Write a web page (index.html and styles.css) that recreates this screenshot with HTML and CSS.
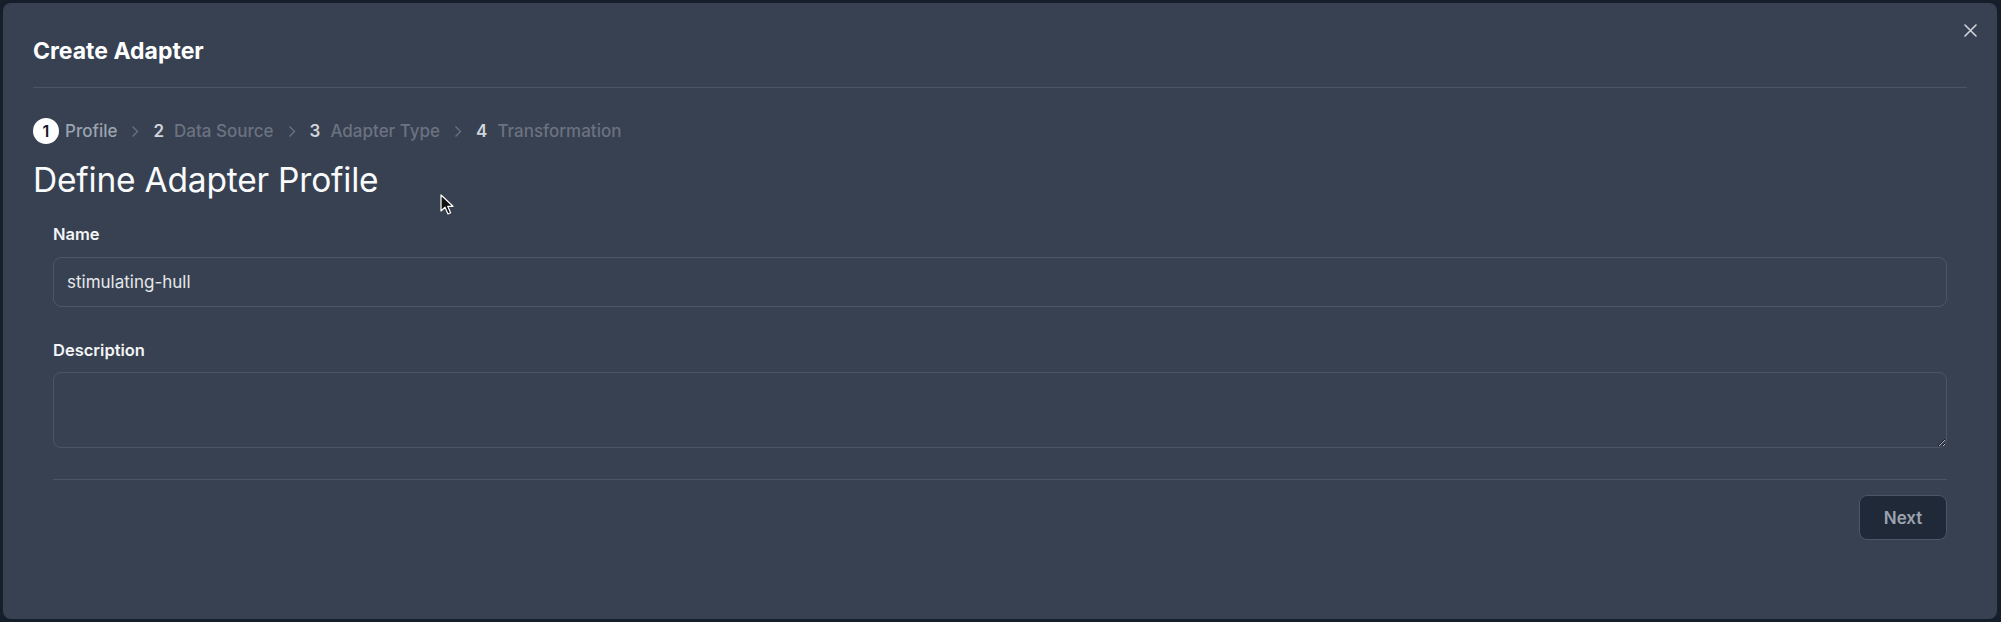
FILE: index.html
```html
<!DOCTYPE html>
<html lang="en">
<head>
<meta charset="utf-8">
<title>Create Adapter</title>
<link rel="stylesheet" href="styles.css">
</head>
<body>
<div class="modal">
  <button class="close" aria-label="Close">
    <svg width="13" height="13" viewBox="0 0 13 13"><path d="M1 1 L12 12 M12 1 L1 12" stroke="#d1d5db" stroke-width="1.6" stroke-linecap="round"/></svg>
  </button>
  <div class="header">
    <h2 class="title">Create Adapter</h2>
  </div>
  <ol class="steps">
    <li class="step active"><span class="num circle">1</span><span class="label">Profile</span></li>
    <li class="chev"><svg width="8" height="13" viewBox="0 0 8 13"><path d="M1.5 1.5 L6.5 6.5 L1.5 11.5" fill="none" stroke="#6b7280" stroke-width="1.3"/></svg></li>
    <li class="step"><span class="num">2</span><span class="label">Data Source</span></li>
    <li class="chev"><svg width="8" height="13" viewBox="0 0 8 13"><path d="M1.5 1.5 L6.5 6.5 L1.5 11.5" fill="none" stroke="#6b7280" stroke-width="1.3"/></svg></li>
    <li class="step"><span class="num">3</span><span class="label">Adapter Type</span></li>
    <li class="chev"><svg width="8" height="13" viewBox="0 0 8 13"><path d="M1.5 1.5 L6.5 6.5 L1.5 11.5" fill="none" stroke="#6b7280" stroke-width="1.3"/></svg></li>
    <li class="step"><span class="num">4</span><span class="label">Transformation</span></li>
  </ol>
  <h1 class="heading">Define Adapter Profile</h1>
  <form class="form">
    <label class="field-label" for="name">Name</label>
    <input class="input" id="name" type="text" value="stimulating-hull">
    <label class="field-label desc-label" for="desc">Description</label>
    <textarea class="textarea" id="desc"></textarea>
    <div class="footer">
      <button type="button" class="next">Next</button>
    </div>
  </form>
  <svg class="cursor" width="15" height="22" viewBox="0 0 15 22"><path d="M1 1 L1 17 L5 13.2 L8 20 L10.6 18.8 L7.7 12.3 L13 12.3 Z" fill="#111" stroke="#fff" stroke-width="1.2" stroke-linejoin="round"/></svg>
</div>
</body>
</html>
```

FILE: styles.css
```css
* { box-sizing: border-box; }
html, body { margin: 0; padding: 0; }
body {
  background: #171e2b;
  width: 2001px;
  height: 622px;
  overflow: hidden;
  font-family: Inter, "Noto Sans", "Liberation Sans", sans-serif;
  padding: 3px 4px 3px 3px;
}
.modal {
  position: relative;
  width: 1994px;
  height: 616px;
  background: #374151;
  border-radius: 8px;
  padding: 0 30px;
}
.close {
  position: absolute;
  top: 21px;
  right: 20px;
  background: none;
  border: 0;
  padding: 0;
  width: 13px;
  height: 13px;
  display: block;
}
.close svg { display: block; }
.header {
  padding-top: 33px;
  padding-bottom: 21px;
  border-bottom: 1px solid #4b5563;
}
.title {
  margin: 0;
  font-size: 23px;
  line-height: 30px;
  font-weight: 700;
  color: #ffffff;
}
.steps {
  list-style: none;
  margin: 30px 0 0;
  padding: 0;
  display: flex;
  align-items: center;
  height: 26px;
  font-size: 17px;
  gap: 14px;
}
.step {
  display: flex;
  align-items: center;
  gap: 10px;
}
.step.active { gap: 6px; }
.num {
  font-weight: 600;
  color: #d1d5db;
}
.num.circle {
  width: 26px;
  height: 26px;
  border-radius: 50%;
  background: #ffffff;
  color: #111827;
  display: flex;
  align-items: center;
  justify-content: center;
  font-size: 16px;
}
.label {
  font-weight: 500;
  color: #6b7280;
}
.step.active .label { color: #9ca3af; }
.chev { display: flex; align-items: center; }
.chev svg { display: block; }
.heading {
  margin: 17px 0 0;
  font-size: 33.5px;
  line-height: 38px;
  font-weight: 400;
  color: #f9fafb;
  letter-spacing: -0.2px;
}
.form {
  padding: 0 20px;
  margin-top: 23px;
  display: flex;
  flex-direction: column;
}
.field-label {
  font-size: 16.5px;
  line-height: 24px;
  font-weight: 600;
  color: #f3f4f6;
}
.input {
  margin-top: 11px;
  height: 50px;
  background: #374151;
  border: 1px solid #4b5563;
  border-radius: 8px;
  padding: 0 13px;
  font-family: inherit;
  font-size: 17px;
  color: #e5e7eb;
  outline: none;
}
.desc-label { margin-top: 31px; }
.textarea {
  margin-top: 10px;
  height: 76px;
  background: #374151;
  border: 1px solid #4b5563;
  border-radius: 8px;
  padding: 10px 13px;
  font-family: inherit;
  font-size: 17px;
  color: #e5e7eb;
  outline: none;
  resize: vertical;
  color-scheme: dark;
}
.footer {
  margin-top: 31px;
  border-top: 1px solid #4b5563;
  padding-top: 15px;
  display: flex;
  justify-content: flex-end;
}
.next {
  width: 88px;
  height: 45px;
  background: #1f2937;
  border: 1px solid #4b5563;
  border-radius: 8px;
  font-family: inherit;
  font-size: 17px;
  font-weight: 600;
  color: #9ca3af;
}
.cursor {
  position: absolute;
  left: 437px;
  top: 191px;
}
```
